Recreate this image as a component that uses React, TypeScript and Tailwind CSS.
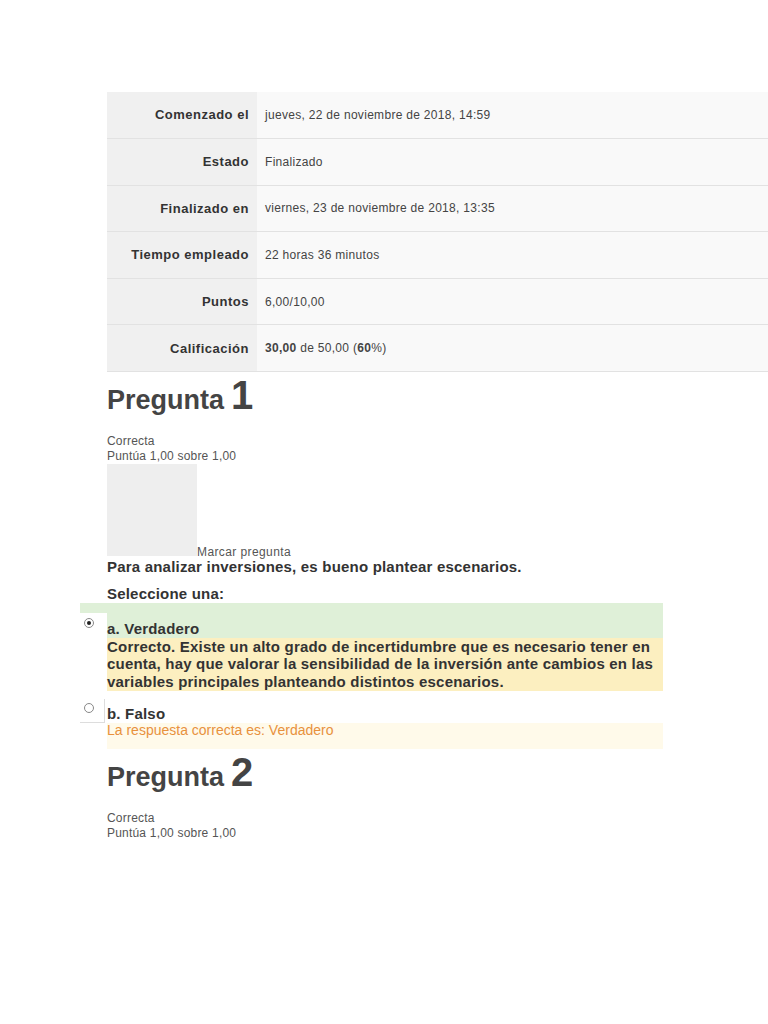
import React from "react";

const rows: { label: string; value: React.ReactNode }[] = [
  { label: "Comenzado el", value: "jueves, 22 de noviembre de 2018, 14:59" },
  { label: "Estado", value: "Finalizado" },
  { label: "Finalizado en", value: "viernes, 23 de noviembre de 2018, 13:35" },
  { label: "Tiempo empleado", value: "22 horas 36 minutos" },
  { label: "Puntos", value: "6,00/10,00" },
  {
    label: "Calificación",
    value: (
      <>
        <b>30,00</b> de 50,00 (<b>60</b>%)
      </>
    ),
  },
];

function Radio({ checked }: { checked?: boolean }) {
  return (
    <svg width="12" height="12" viewBox="0 0 12 12">
      <circle cx="6" cy="6" r="4.5" fill="#fff" stroke="#888" strokeWidth="1" />
      {checked && <circle cx="6" cy="6" r="2" fill="#222" />}
    </svg>
  );
}

function Heading({ n }: { n: number }) {
  return (
    <h3 className="flex items-baseline font-bold text-[#444]">
      <span className="text-[27px]">Pregunta</span>
      <span className="ml-[7px] text-[40px] leading-none">{n}</span>
    </h3>
  );
}

function Info() {
  return (
    <div className="text-[12px] leading-[15px] tracking-[0.2px] text-[#555]">
      <div>Correcta</div>
      <div>Puntúa 1,00 sobre 1,00</div>
    </div>
  );
}

export default function App() {
  return (
    <div
      className="min-h-[1024px] bg-white pt-[92px] text-[#333]"
      style={{ fontFamily: '"Liberation Sans", Arial, sans-serif' }}
    >
      <table className="ml-[107px] w-[661px] border-collapse">
        <tbody>
          {rows.map((r) => (
            <tr key={r.label} className="h-[46.6px] border-b border-[#e2e2e2]">
              <th className="w-[150px] bg-[#f0f0f0] pr-[8px] text-right text-[13px] font-bold tracking-[0.5px] text-[#333]">
                {r.label}
              </th>
              <td className="bg-[#f9f9f9] pl-[8px] text-[12px] tracking-[0.3px] text-[#444]">
                {r.value}
              </td>
            </tr>
          ))}
        </tbody>
      </table>

      <div className="ml-[107px] mt-[3px]">
        <Heading n={1} />
        <div className="mt-[13px]">
          <Info />
        </div>
        <div className="flex items-end">
          <div className="h-[92px] w-[90px] bg-[#eeeeee]" />
          <span className="text-[12px] leading-[8px] tracking-[0.4px] text-[#555]">
            Marcar pregunta
          </span>
        </div>
        <p className="mt-[2px] text-[15px] font-bold leading-[18px] tracking-[0.2px]">
          Para analizar inversiones, es bueno plantear escenarios.
        </p>
        <p className="mt-[9px] text-[15px] font-bold leading-[18px] tracking-[0.2px]">
          Seleccione una:
        </p>
      </div>

      <div className="ml-[80px] w-[583px] text-[15px] font-bold tracking-[0.2px]">
        <div className="flex h-[35px] items-end bg-[#dff0d8]">
          <div className="flex h-[25px] w-[27px] items-start bg-white pl-[3px] pt-[4px]">
            <Radio checked />
          </div>
          <span className="leading-[18px]">a. Verdadero</span>
        </div>
        <div className="ml-[27px] bg-[#fcefc0] pb-[1px] leading-[17.5px]">
          Correcto. Existe un alto grado de incertidumbre que es necesario tener en cuenta, hay
          que valorar la sensibilidad de la inversión ante cambios en las variables principales
          planteando distintos escenarios.
        </div>
        <div className="mt-[8px] flex h-[24px] items-end">
          <div className="flex h-[24px] w-[25px] items-start border-b border-r border-[#ddd] pl-[3px] pt-[3px]">
            <Radio />
          </div>
          <span className="ml-[2px] leading-[18px]">b. Falso</span>
        </div>
        <div className="ml-[27px] h-[26px] bg-[#fffaea] text-[14px] font-normal leading-[14px] tracking-normal text-[#e8913d]">
          La respuesta correcta es: Verdadero
        </div>
      </div>

      <div className="ml-[107px] mt-[3px]">
        <Heading n={2} />
        <div className="mt-[13px]">
          <Info />
        </div>
      </div>
    </div>
  );
}
